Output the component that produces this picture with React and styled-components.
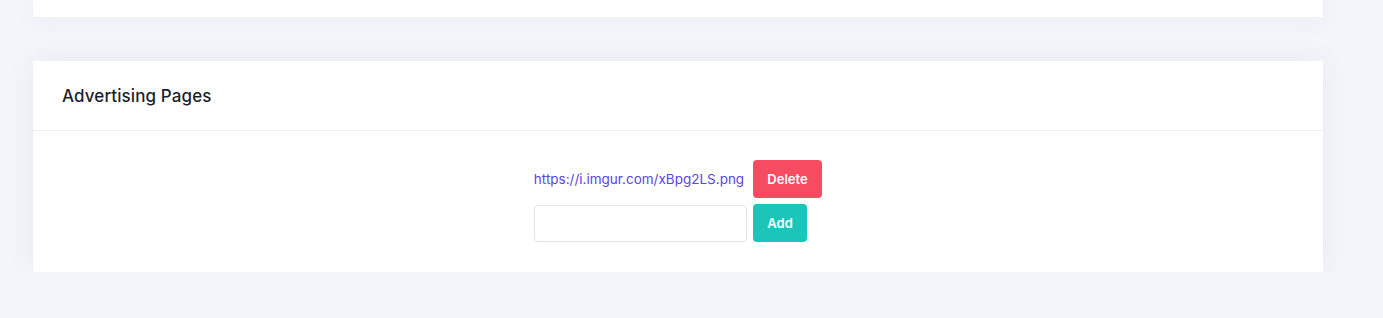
import React from 'react';
import styled, { createGlobalStyle } from 'styled-components';

const GlobalStyle = createGlobalStyle`
  html, body {
    margin: 0;
    padding: 0;
    background: #f2f5f9;
    font-family: "Inter", "Noto Sans", sans-serif;
  }
`;

const Page = styled.div`
  padding: 0 60px 0 33px;
  display: flex;
  flex-direction: column;
  gap: 44px;
`;

const Card = styled.div`
  background: #fff;
  box-shadow: 0 0 28px rgba(82, 63, 105, 0.06);
  height: ${({ $height }) => ($height ? `${$height}px` : 'auto')};
`;

const CardHeader = styled.div`
  height: 69px;
  padding: 0 29px;
  display: flex;
  align-items: center;
  border-bottom: 1px solid #ebedf2;
`;

const Title = styled.h3`
  margin: 0;
  font-size: 17px;
  font-weight: 500;
  color: #1c1f2b;
  letter-spacing: 0.1px;
`;

const CardBody = styled.div`
  padding: 29px 0 30px;
  display: flex;
  justify-content: center;
`;

const Table = styled.div`
  display: grid;
  grid-template-columns: 213px auto;
  column-gap: 6px;
  row-gap: 6px;
  align-items: center;
`;

const Link = styled.a`
  color: #5a44e6;
  font-size: 13.5px;
  text-decoration: none;
  white-space: nowrap;
`;

const Button = styled.button`
  border: none;
  border-radius: 4px;
  height: 38px;
  padding: 0 14.5px;
  font-family: inherit;
  font-size: 13px;
  font-weight: 600;
  color: #fff;
  background: ${({ $variant }) => ($variant === 'danger' ? '#f74b62' : '#1cc5b9')};
  justify-self: start;
  cursor: pointer;
`;

const Input = styled.input`
  box-sizing: border-box;
  width: 213px;
  height: 37px;
  border: 1px solid #e2e5ec;
  border-radius: 4px;
  padding: 0 10px;
  font-family: inherit;
  outline: none;
`;

export default function App() {
  return (
    <>
      <GlobalStyle />
      <Page>
        <Card $height={17} />
        <Card>
          <CardHeader>
            <Title>Advertising Pages</Title>
          </CardHeader>
          <CardBody>
            <Table>
              <Link href="#">https://i.imgur.com/xBpg2LS.png</Link>
              <Button $variant="danger">Delete</Button>
              <Input type="text" />
              <Button $variant="success">Add</Button>
            </Table>
          </CardBody>
        </Card>
      </Page>
    </>
  );
}
